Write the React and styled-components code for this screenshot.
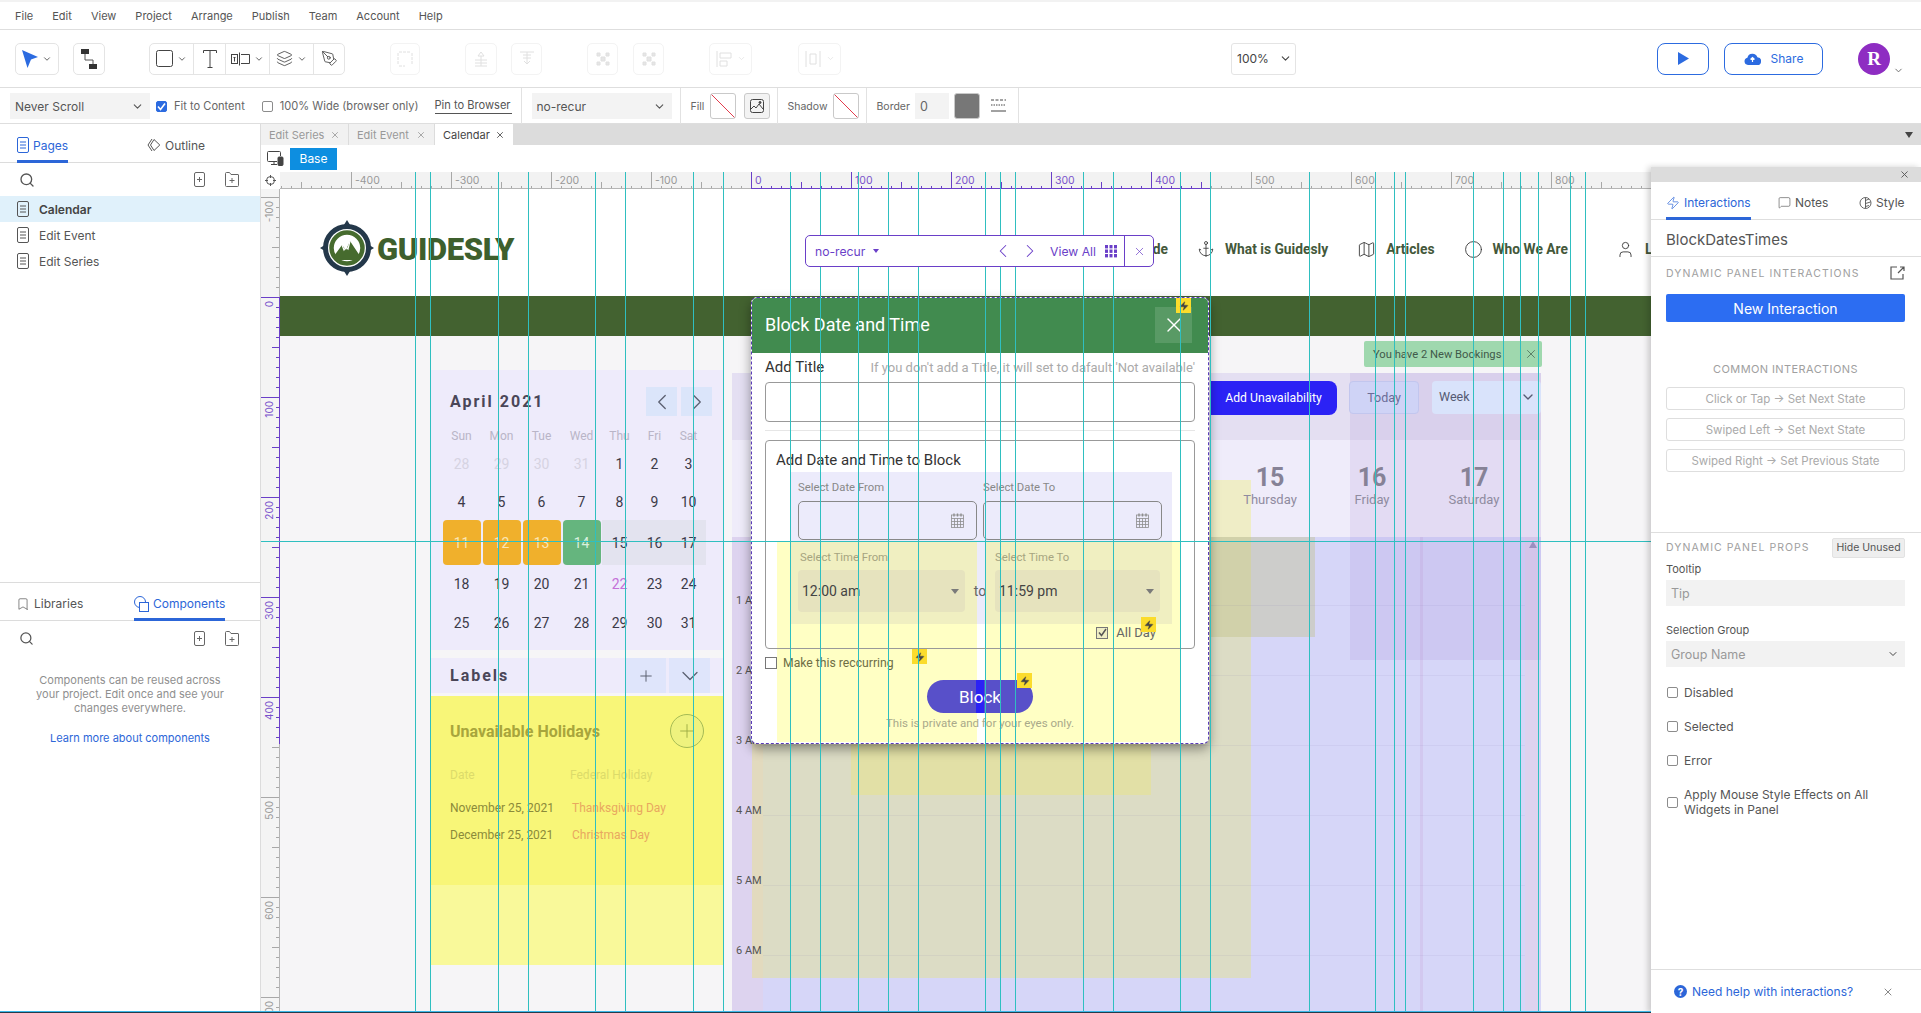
import React from 'react';
import styled, { createGlobalStyle } from 'styled-components';
import {
  Search, ChevronDown, X, ChevronLeft, ChevronRight, Plus, Anchor, Map as MapIcon, Info, User,
  Layers, PenTool, Bookmark, Zap, MessageSquare,
} from 'lucide-react';

const GlobalStyle = createGlobalStyle`
  html, body { margin: 0; padding: 0; height: 100%; overflow: hidden; background: #fff; }
  body { font-family: 'Inter', 'Liberation Sans', sans-serif; color: #444; }
  * { box-sizing: border-box; }
`;

/* ---------- app chrome ---------- */
const Shell = styled.div`
  width: 1921px;
  height: 1013px;
  display: flex;
  flex-direction: column;
  overflow: hidden;
  font-size: 11.1px;
`;

const MenuBar = styled.div`
  height: 30px;
  flex: none;
  display: flex;
  align-items: center;
  gap: 19px;
  padding: 0 0 0 15px;
  border-top: 2px solid #f2f2f2;
  border-bottom: 1px solid #dedede;
  color: #555;
  font-size: 11px;
`;

const Toolbar = styled.div`
  height: 58px;
  flex: none;
  display: flex;
  align-items: center;
  padding: 0 0 0 15px;
  border-bottom: 1px solid #dedede;
`;

const ToolGroup = styled.div`
  height: 32px;
  flex: none;
  display: flex;
  align-items: stretch;
  margin-left: ${p => p.$gap || 0}px;
  border: 1px solid ${p => (p.$off ? '#f3f3f3' : '#e4e4e4')};
  border-radius: 5px;
`;

const ToolCell = styled.div`
  width: ${p => p.$w}px;
  display: flex;
  align-items: center;
  justify-content: center;
  gap: 4px;
  color: ${p => (p.$off ? '#e2e2e2' : '#444')};
  & + & { border-left: 1px solid #e4e4e4; }
`;

const ZoomSelect = styled.div`
  width: 65px;
  height: 32px;
  margin-left: ${p => p.$gap}px;
  display: flex;
  align-items: center;
  justify-content: space-between;
  padding: 0 3px 0 5px;
  border: 1px solid #e4e4e4;
  border-radius: 3px;
  font-size: 12px;
`;

const PlayButton = styled.div`
  width: 52px;
  height: 32px;
  margin-left: 361px;
  display: flex;
  align-items: center;
  justify-content: center;
  border: 1px solid #2c6be0;
  border-radius: 8px;
`;

const ShareButton = styled.div`
  width: 99px;
  height: 32px;
  margin-left: 15px;
  display: flex;
  align-items: center;
  justify-content: center;
  gap: 10px;
  border: 1px solid #2c6be0;
  border-radius: 8px;
  color: #2c6be0;
  font-size: 12px;
`;

const Avatar = styled.div`
  width: 32px;
  height: 32px;
  margin-left: 35px;
  border-radius: 50%;
  background: #8e2dc2;
  color: #fff;
  display: flex;
  align-items: center;
  justify-content: center;
  font: 700 19px 'Liberation Serif', serif;
`;

const AvatarCaret = styled.div`
  margin: 24px 0 0 3px;
  color: #666;
  display: flex;
`;

const PropsBar = styled.div`
  height: 36px;
  flex: none;
  display: flex;
  align-items: center;
  padding: 1px 0 0 10px;
  border-bottom: 1px solid #dedede;
  color: #666;
  white-space: nowrap;
`;

const FieldSelect = styled.div`
  width: ${p => p.$w}px;
  height: 26px;
  flex: none;
  margin-left: ${p => p.$gap || 0}px;
  display: flex;
  align-items: center;
  justify-content: space-between;
  padding: 0 6px 0 5px;
  background: #f3f3f3;
  font-size: 12px;
  color: #555;
`;

const CheckLabel = styled.label`
  display: flex;
  align-items: center;
  gap: 7px;
  flex: none;
  margin-left: ${p => p.$gap}px;
`;

const CheckBox = styled.span`
  width: 11px;
  height: 11px;
  flex: none;
  border-radius: 2px;
  border: 1px solid ${p => (p.$on ? '#2c6be0' : '#8c8c8c')};
  background: ${p => (p.$on ? '#2c6be0' : '#fff')};
  color: #fff;
  display: flex;
  align-items: center;
  justify-content: center;
`;

const PinLink = styled.span`
  margin-left: 16px;
  padding-bottom: 1px;
  border-bottom: 1px solid #555;
  color: #555;
  flex: none;
  width: 77px;
`;

const PropGroup = styled.div`
  height: 36px;
  flex: none;
  width: ${p => p.$w}px;
  margin-left: ${p => p.$gap || 0}px;
  border-left: 1px solid #e2e2e2;
  display: flex;
  align-items: center;
  padding-left: ${p => p.$pad || 0}px;
  font-size: 10.5px;
`;

const Swatch = styled.div`
  width: 26px;
  height: 26px;
  flex: none;
  margin-left: ${p => p.$gap || 0}px;
  border: 1px solid #c9c9c9;
  border-radius: 3px;
  background: ${p => p.$bg || 'linear-gradient(to top right, #fff 48%, #e23b4c 48.5%, #e23b4c 51.5%, #fff 52%)'};
  display: flex;
  align-items: center;
  justify-content: center;
`;

const BorderLines = styled.div`
  margin-left: 11px;
  display: flex;
`;

const NumBox = styled.div`
  width: 34px;
  height: 26px;
  margin-left: 5px;
  padding-left: 5px;
  background: #f3f3f3;
  display: flex;
  align-items: center;
  font-size: 12.5px;
`;

const Workspace = styled.div`
  flex: 1;
  min-height: 0;
  display: flex;
`;

/* ---------- left sidebar ---------- */
const Sidebar = styled.aside`
  width: 261px;
  flex: none;
  display: flex;
  flex-direction: column;
  border-right: 1px solid #dcdcdc;
  background: #fff;
`;

const SideSection = styled.div`
  height: ${p => (p.$h ? `${p.$h}px` : 'auto')};
  flex: ${p => (p.$h ? 'none' : 1)};
  border-top: ${p => (p.$top ? '1px solid #dcdcdc' : 'none')};
`;

const SideTabs = styled.div`
  height: ${p => p.$h}px;
  display: flex;
  border-bottom: 1px solid #dcdcdc;
  position: relative;
`;

const SideTab = styled.div`
  position: absolute;
  left: ${p => p.$x}px;
  top: 0;
  height: calc(100% + 1px);
  padding-top: 6px;
  display: flex;
  align-items: center;
  gap: 4px;
  font-size: 12px;
  color: ${p => (p.$on ? '#2c66d8' : '#555')};
  border-bottom: 3px solid ${p => (p.$on ? '#2c66d8' : 'transparent')};
`;

const SearchRow = styled.div`
  height: ${p => p.$h}px;
  display: flex;
  align-items: center;
  padding: 0 21px 0 19px;
  gap: 20px;
  color: #555;
  & > svg:first-child { margin-right: auto; }
`;

const PageRow = styled.div`
  height: 26px;
  display: flex;
  align-items: center;
  gap: 10px;
  padding-left: 17px;
  font-size: 12px;
  font-weight: ${p => (p.$on ? 600 : 400)};
  color: ${p => (p.$on ? '#444' : '#555')};
  background: ${p => (p.$on ? '#e0f1fb' : 'transparent')};
`;

const EmptyNote = styled.p`
  margin: 17px 0 0;
  text-align: center;
  font-size: 11px;
  line-height: 14px;
  color: #8f8f8f;
`;

const LearnLink = styled.div`
  margin-top: 16px;
  text-align: center;
  font-size: 11px;
  color: #2c66d8;
`;

/* ---------- main area ---------- */
const Main = styled.main`
  flex: 1;
  min-width: 0;
  position: relative;
  display: flex;
  flex-direction: column;
  background: #fff;
`;

const TabBar = styled.div`
  height: 21px;
  flex: none;
  display: flex;
  background: #dcdcdc;
  position: relative;
`;

const DocTab = styled.div`
  width: ${p => p.$w}px;
  display: flex;
  align-items: center;
  justify-content: space-between;
  padding: 0 8px;
  margin-right: 1px;
  font-size: 11px;
  background: ${p => (p.$on ? '#fff' : '#f1f1f1')};
  color: ${p => (p.$on ? '#444' : '#999')};
`;

const TabMenuCaret = styled.span`
  position: absolute;
  right: 8px;
  top: 8px;
  border: 4.5px solid transparent;
  border-top: 6px solid #444;
  border-bottom: 0;
`;

const DeviceRow = styled.div`
  height: 27px;
  flex: none;
  display: flex;
  align-items: center;
  gap: 6px;
  padding-left: 6px;
  color: #444;
`;

const BaseButton = styled.div`
  width: 47px;
  height: 22px;
  display: flex;
  align-items: center;
  justify-content: center;
  background: #0d8ee0;
  color: #fff;
  font-size: 12px;
`;

const RulerRow = styled.div`
  height: 17px;
  flex: none;
  display: flex;
  background: #f2f2f2;
`;

const RulerCorner = styled.div`
  width: 19px;
  flex: none;
  background: #fff;
  display: flex;
  align-items: center;
  justify-content: center;
  color: #555;
`;

const CanvasRow = styled.div`
  flex: 1;
  min-height: 0;
  display: flex;
  overflow: hidden;
`;

const SideRuler = styled.div`
  width: 19px;
  flex: none;
  background: #f4f4f4;
  display: flex;
`;

/* free canvas: what sits on it is placed by the design's own coordinates */
const Canvas = styled.div`
  flex: 1;
  min-width: 0;
  position: relative;
  overflow: hidden;
  background: #f6f5f7;
  font-family: 'Roboto', 'Liberation Sans', sans-serif;
`;

const SiteHeader = styled.div`
  height: 107px;
  background: #fff;
`;

const SiteBand = styled.div`
  height: 40px;
  background: #436230;
`;

const LogoWrap = styled.div`
  position: absolute;
  left: 40px;
  top: 31px;
  display: flex;
  align-items: center;
  gap: 3px;
`;

const LogoText = styled.span`
  margin-top: 2px;
  font: 900 31px 'Roboto', sans-serif;
  color: #3e5f2d;
  letter-spacing: -0.35px;
`;

const SiteNav = styled.nav`
  position: absolute;
  left: 852px;
  top: 49px;
  height: 22px;
  display: flex;
  align-items: center;
  gap: 29px;
  white-space: nowrap;
`;

const SiteNavItem = styled.span`
  display: flex;
  align-items: center;
  gap: 10px;
  margin-left: ${p => p.$gap || 0}px;
  font-size: 13.8px;
  font-weight: 700;
  color: #44583a;
  svg { color: #333; }
`;

const SelectionDots = styled.span`
  position: absolute;
  left: 670px;
  top: 106px;
  width: 100px;
  border-top: 1px dashed #fff;
`;

/* calendar sidebar on the canvas */
const CalPanel = styled.section`
  position: absolute;
  left: 150px;
  top: 181px;
  width: 293px;
  height: 280px;
  padding: 17px 11px 0 0;
  background: #eeebfb;
`;

const CalHead = styled.div`
  display: flex;
  align-items: center;
  gap: 4px;
  padding-left: 20px;
`;

const CalTitle = styled.h3`
  margin: 0 auto 0 0;
  font-size: 16px;
  font-weight: 700;
  letter-spacing: 2px;
  color: #4a4658;
`;

const CalNav = styled.div`
  width: 31px;
  height: 29px;
  background: #dbe5fa;
  color: #5b6070;
  display: flex;
  align-items: center;
  justify-content: center;
`;

const CalGrid = styled.div`
  display: grid;
  grid-template-columns: 40px 40px 40px 40px 36px 34px 34px;
  grid-template-rows: ${p => p.$rows};
  margin: ${p => p.$top}px 0 0 11.5px;
`;

const WeekName = styled.span`
  display: flex;
  align-items: center;
  justify-content: center;
  font-size: 12px;
  color: #b9b5c7;
`;

const tones = {
  muted: { color: '#d6d3e2' },
  plain: { color: '#3c3a48' },
  held: { color: '#fbe6b4', background: '#f0b02c', margin: '0 1px', borderRadius: '4px' },
  today: { color: '#d8f0df', background: '#65b57e', margin: '0 1px', borderRadius: '4px' },
  band: { color: '#3c3a48', background: '#e3e3ef' },
  pink: { color: '#c470d8' },
};

const DayCell = styled.span`
  display: flex;
  align-items: center;
  justify-content: center;
  font-size: 14px;
  ${p => tones[p.$tone]}
`;

const LabelsBar = styled.section`
  position: absolute;
  left: 150px;
  top: 469px;
  width: 293px;
  height: 35px;
  display: flex;
  align-items: center;
  gap: 3px;
  padding: 0 13px 0 20px;
  background: #eeebfb;
`;

const LabelsTitle = styled.h3`
  margin: 0 auto 0 0;
  font-size: 16px;
  font-weight: 700;
  letter-spacing: 2px;
  color: #4a4658;
`;

const LabelsBtn = styled.div`
  width: 41px;
  height: 35px;
  background: #dfe5fb;
  color: #5b6070;
  display: flex;
  align-items: center;
  justify-content: center;
`;

const HolidayPanel = styled.section`
  position: absolute;
  left: 150px;
  top: 507px;
  width: 293px;
  height: 269px;
  background: linear-gradient(#f8f678 189px, #f9f99a 189px);
`;

const HolidayHead = styled.div`
  height: 34px;
  margin: 18px 19px 0 20px;
  display: flex;
  align-items: center;
  justify-content: space-between;
`;

const HolidayTitle = styled.h4`
  margin: 0;
  font-size: 16px;
  font-weight: 700;
  color: #a8a53c;
`;

const RoundAdd = styled.div`
  width: 34px;
  height: 34px;
  border-radius: 50%;
  border: 1px solid #a5bb55;
  background: #eef27e;
  color: #9bab45;
  display: flex;
  align-items: center;
  justify-content: center;
`;

const HolidayRow = styled.div`
  display: grid;
  grid-template-columns: 120px 1fr;
  margin: ${p => p.$top}px 0 0 20px;
  font-size: 12px;
  line-height: 14px;
  color: ${p => (p.$head ? '#dcdb6a' : '#8b8a3a')};
`;

const HolidayName = styled.span`
  color: ${p => (p.$head ? '#dcdb6a' : '#e8a860')};
  margin-left: ${p => (p.$head ? 0 : 2)}px;
`;

/* big week calendar on the canvas */
const Tint = styled.div`
  position: absolute;
  left: ${p => p.$x - 280}px;
  top: ${p => p.$y - 189}px;
  width: ${p => p.$w}px;
  height: ${p => p.$h}px;
  background: ${p => p.$bg};
`;

const TimeGrid = styled.div`
  position: absolute;
  left: 456px;
  top: 347px;
  width: 789px;
`;

const TimeRow = styled.div`
  height: 70px;
  position: relative;
  display: flex;
  align-items: flex-end;
  font-size: 11px;
  line-height: 11px;
  color: #555;
  &::after {
    content: '';
    position: absolute;
    left: 27px;
    right: 0;
    bottom: 0;
    height: 1px;
    background: rgba(120, 100, 170, 0.08);
  }
`;

const BookingNote = styled.div`
  position: absolute;
  left: 1084px;
  top: 152px;
  width: 178px;
  height: 26px;
  display: flex;
  align-items: center;
  justify-content: space-between;
  padding: 0 4px 0 9px;
  background: #9fd8ae;
  font-size: 11.2px;
  color: #3f5a4a;
  border-radius: 2px;
`;

const CalTools = styled.div`
  position: absolute;
  left: 930px;
  top: 192px;
  display: flex;
  align-items: flex-start;
`;

const AddButton = styled.div`
  width: 127px;
  height: 34px;
  display: flex;
  align-items: center;
  justify-content: center;
  border-radius: 0 8px 8px 0;
  background: #2b22f5;
  color: #fff;
  font-size: 12.2px;
`;

const TodayButton = styled.div`
  width: 70px;
  height: 33px;
  margin-left: 12px;
  display: flex;
  align-items: center;
  justify-content: center;
  border: 1px solid #c2c6ee;
  border-radius: 4px;
  background: #cfd3f6;
  color: #6b6c96;
  font-size: 12.5px;
`;

const WeekSelect = styled.div`
  width: 109px;
  height: 33px;
  margin-left: 13px;
  display: flex;
  align-items: center;
  justify-content: space-between;
  padding: 0 5px 2px 7px;
  border-radius: 4px;
  background: #d9e3fb;
  color: #555a72;
  font-size: 12.5px;
`;

const DayHeads = styled.div`
  position: absolute;
  left: 939px;
  top: 275px;
  display: flex;
`;

const DayHead = styled.div`
  width: 102px;
  display: flex;
  flex-direction: column;
  align-items: center;
  color: #8f8ba0;
  font-size: 13px;
  line-height: 16px;
`;

const DayNumber = styled.strong`
  font-size: 25px;
  line-height: 28px;
  font-weight: 700;
  color: #868296;
`;

const ScrollUp = styled.span`
  position: absolute;
  left: 1249px;
  top: 352px;
  border: 4.5px solid transparent;
  border-top: 0;
  border-bottom: 7px solid #9b8fc0;
`;

/* the dialog */
const Modal = styled.div`
  position: absolute;
  left: 471px;
  top: 108px;
  width: 458px;
  height: 447px;
  background: #fff;
  border: 1px dashed #5a3cb8;
  border-radius: 6px;
  box-shadow: 0 5px 12px rgba(0, 0, 0, 0.4);
`;

const ModalHead = styled.header`
  position: relative;
  height: 55px;
  display: flex;
  align-items: center;
  justify-content: space-between;
  padding: 0 16px 2px 13px;
  background: #418b4f;
  border-radius: 5px 5px 0 0;
  color: #fff;
`;

const ModalTitle = styled.h2`
  margin: 0;
  font-size: 18px;
  font-weight: 400;
`;

const CloseSquare = styled.div`
  width: 37px;
  height: 36px;
  display: flex;
  align-items: center;
  justify-content: center;
  background: rgba(255, 255, 255, 0.13);
`;

const ModalTint = styled.div`
  position: absolute;
  left: ${p => p.$x}px;
  top: ${p => p.$y}px;
  width: ${p => p.$w}px;
  height: ${p => p.$h}px;
  background: ${p => p.$bg};
`;

const ModalBody = styled.div`
  position: relative;
  padding: 3px 13px 0;
`;

const TitleRow = styled.div`
  height: 22px;
  display: flex;
  align-items: center;
  justify-content: space-between;
  font-size: 15px;
  color: #333;
`;

const Hint = styled.span`
  font-size: 13px;
  color: #aaa;
`;

const TextBox = styled.div`
  height: 40px;
  margin-top: 4px;
  border: 1px solid #999;
  border-radius: 4px;
`;

const Rule = styled.div`
  height: 1px;
  margin-top: 8px;
  background: #e6e6e6;
`;

const BlockBox = styled.fieldset`
  height: 209px;
  margin: 9px 0 0;
  padding: 9px 32px 0 32px;
  border: 1px solid #999;
  border-radius: 4px;
  display: block;
`;

const BoxTitle = styled.div`
  margin-left: -22px;
  font-size: 15px;
  line-height: 20px;
  color: #333;
`;

const FieldRow = styled.div`
  display: flex;
  margin-top: ${p => p.$top}px;
`;

const FieldCol = styled.div`
  width: ${p => p.$w}px;
  flex: none;
  margin-left: ${p => p.$gap || 0}px;
`;

const FieldLabel = styled.div`
  height: 14px;
  margin-left: ${p => p.$ml || 0}px;
  font-size: 11.3px;
  line-height: 14px;
  color: ${p => p.$color || '#888'};
`;

const DateInput = styled.div`
  height: 39px;
  margin-top: 6px;
  display: flex;
  align-items: center;
  justify-content: flex-end;
  padding-right: 12px;
  border: 1px solid #888;
  border-radius: 5px;
`;

const TimeSelect = styled.div`
  height: 42px;
  margin-top: 5px;
  display: flex;
  align-items: center;
  justify-content: space-between;
  padding: 0 6px 0 4px;
  border-radius: 4px;
  background: #e6e3be;
  font-size: 14px;
  color: #444;
`;

const Caret = styled.span`
  border: 4px solid transparent;
  border-top: 5px solid #7a7a7a;
  border-bottom: 0;
`;

const ToWord = styled.span`
  width: 30px;
  flex: none;
  margin-top: 19px;
  align-self: center;
  text-align: center;
  font-size: 14px;
  color: #666;
`;

const AllDayRow = styled.div`
  display: flex;
  justify-content: flex-end;
  align-items: center;
  gap: 8px;
  margin-top: 13px;
  padding-right: 6px;
  font-size: 13px;
  color: #666;
`;

const MiniCheck = styled.span`
  width: 12px;
  height: 12px;
  border: 1px solid #777;
  display: flex;
  align-items: center;
  justify-content: center;
  color: #555;
  background: ${p => (p.$fill ? '#efeec4' : 'transparent')};
`;

const RecurRow = styled.div`
  height: 14px;
  margin-top: 7px;
  display: flex;
  align-items: center;
  gap: 6px;
  font-size: 12.2px;
  color: #6e6e45;
`;

const BlockButton = styled.div`
  width: 106px;
  height: 33px;
  margin: 10px auto 0;
  display: flex;
  align-items: center;
  justify-content: center;
  border-radius: 17px;
  background: linear-gradient(90deg, #5850c9 49px, #2b22f5 49px, #2b22f5 57px, #5850c9 57px);
  color: #fff;
  font-size: 17px;
`;

const PrivateNote = styled.div`
  margin-top: 3px;
  text-align: center;
  font-size: 11.5px;
  line-height: 14px;
  color: #a9a98a;
`;

const BoltBadge = styled.span`
  position: absolute;
  z-index: 2;
  left: ${p => p.$x - 751}px;
  top: ${p => p.$y - 297}px;
  width: 15px;
  height: 15px;
  display: flex;
  align-items: center;
  justify-content: center;
  background: #fbdc2c;
  color: #444;
`;

/* overlays in the main area */
const GuideV = styled.span`
  position: absolute;
  top: 48px;
  bottom: 2px;
  width: 1px;
  z-index: 3;
  background: #2fbfc0;
`;

const GuideH = styled.span`
  position: absolute;
  left: 0;
  right: 0;
  top: 417px;
  height: 1px;
  z-index: 3;
  background: #2fbfc0;
`;

const RecurPopover = styled.div`
  position: absolute;
  z-index: 4;
  left: 544px;
  top: 111px;
  width: 349px;
  height: 32px;
  display: flex;
  align-items: center;
  background: #fff;
  border: 1px solid #6a3fc8;
  border-radius: 5px;
  color: #6a3fc8;
  font-size: 12.2px;
`;

const RecurName = styled.span`
  display: flex;
  align-items: center;
  gap: 8px;
  margin: 0 auto 0 9px;
`;

const RecurCaret = styled.span`
  border: 3.5px solid transparent;
  border-top: 4.5px solid #6a3fc8;
  border-bottom: 0;
`;

const RecurNav = styled.span`
  display: flex;
  gap: 5px;
  margin-right: 9px;
`;

const ViewAll = styled.span`
  display: flex;
  align-items: center;
  gap: 9px;
  padding-right: 7px;
`;

const RecurClose = styled.span`
  width: 29px;
  align-self: stretch;
  border-left: 1px solid #6a3fc8;
  display: flex;
  align-items: center;
  justify-content: center;
`;

/* right panel */
const RightPanel = styled.aside`
  position: absolute;
  z-index: 5;
  top: 43px;
  right: 0;
  bottom: 0;
  width: 270px;
  display: flex;
  flex-direction: column;
  background: #fff;
  box-shadow: -3px 0 6px rgba(0, 0, 0, 0.18);
`;

const PanelGrip = styled.div`
  height: 15px;
  flex: none;
  display: flex;
  align-items: center;
  justify-content: flex-end;
  padding-right: 11px;
  background: #dcdcdc;
  color: #555;
`;

const PanelTabs = styled.div`
  height: 38px;
  flex: none;
  position: relative;
  border-bottom: 1px solid #dedede;
`;

const PanelTitle = styled.div`
  height: 37px;
  flex: none;
  display: flex;
  align-items: center;
  padding: 3px 0 0 15px;
  font-size: 15px;
  color: #555;
  border-bottom: 1px solid #dedede;
`;

const PanelBody = styled.div`
  flex: 1;
  padding: 0 16px 0 15px;
  display: flex;
  flex-direction: column;
`;

const SectionHead = styled.div`
  display: flex;
  align-items: center;
  justify-content: space-between;
  height: ${p => p.$h}px;
  padding-top: 1px;
  font-size: 10.5px;
  letter-spacing: 1.05px;
  color: #a0a0a0;
  white-space: nowrap;
`;

const NewInteraction = styled.div`
  height: 28px;
  flex: none;
  margin: 6px 0 0;
  display: flex;
  align-items: center;
  justify-content: center;
  border-radius: 2px;
  background: #2c6df2;
  color: #fff;
  font-size: 14px;
`;

const CommonTitle = styled.div`
  margin: 40px 0 11px;
  text-align: center;
  font-size: 11px;
  line-height: 14px;
  letter-spacing: 0.4px;
  color: #a0a0a0;
`;

const CommonButton = styled.div`
  height: 23px;
  margin-bottom: 8px;
  display: flex;
  align-items: center;
  justify-content: center;
  border: 1px solid #dedede;
  border-radius: 3px;
  font-size: 11.5px;
  color: #aaa;
`;

const PropsDivider = styled.div`
  height: 1px;
  flex: none;
  margin: 52px -16px 0 -15px;
  background: #dedede;
`;

const HideUnused = styled.div`
  width: 73px;
  height: 20px;
  display: flex;
  align-items: center;
  justify-content: center;
  border-radius: 2px;
  background: #eee;
  border: 1px solid #e2e2e2;
  font-size: 10.5px;
  letter-spacing: 0;
  color: #555;
`;

const PropLabel = styled.div`
  margin-top: ${p => p.$top}px;
  font-size: 11px;
  line-height: 14px;
  color: #555;
`;

const PropField = styled.div`
  height: 26px;
  flex: none;
  margin-top: 4px;
  display: flex;
  align-items: center;
  justify-content: space-between;
  padding: 0 6px 0 5px;
  background: #f2f2f2;
  font-size: 12.5px;
  color: #999;
`;

const PropCheck = styled.label`
  display: flex;
  align-items: center;
  gap: 6px;
  margin: ${p => p.$top}px 0 0 1px;
  font-size: 12px;
  line-height: 15px;
  color: #555;
`;

const PanelFoot = styled.div`
  height: 44px;
  flex: none;
  display: flex;
  align-items: center;
  justify-content: space-between;
  padding: 0 27px 0 23px;
  border-top: 1px solid #dedede;
`;

const HelpLink = styled.span`
  display: flex;
  align-items: center;
  gap: 5px;
  font-size: 12px;
  color: #2c66d8;
`;

const HelpDot = styled.span`
  width: 13px;
  height: 13px;
  border-radius: 50%;
  background: #2c66d8;
  color: #fff;
  display: flex;
  align-items: center;
  justify-content: center;
  font-size: 10px;
  font-weight: 700;
`;

const BottomEdge = styled.div`
  position: absolute;
  left: -261px;
  right: 270px;
  bottom: 0;
  height: 2px;
  z-index: 6;
  background: linear-gradient(#3bb8e8 50%, #243b4a 50%);
`;

/* ---------- drawings ---------- */
const PageIcon = ({ color = '#555' }) => (
  <svg width="12" height="16" viewBox="0 0 12 16" fill="none" stroke={color} strokeWidth="1">
    <rect x="0.5" y="0.5" width="11" height="15" rx="1.5" />
    <path d="M3 5h6M3 8h6M3 11h6" />
  </svg>
);

const AddPage = () => (
  <svg width="11" height="15" viewBox="0 0 11 15" fill="none" stroke="#666">
    <rect x="0.5" y="0.5" width="10" height="14" rx="1.5" />
    <path d="M5.5 5v5M3 7.5h5" />
  </svg>
);

const AddFolder = () => (
  <svg width="14" height="15" viewBox="0 0 14 15" fill="none" stroke="#666">
    <path d="M.5 1.5a1 1 0 0 1 1-1h3l1.5 2H13a.5.5 0 0 1 .5.5v10.5a1 1 0 0 1-1 1h-11a1 1 0 0 1-1-1z" />
    <path d="M7 6v5M4.5 8.5h5" />
  </svg>
);

const ArrowTool = () => (
  <svg width="16" height="18" viewBox="0 0 16 18">
    <path d="M0 0l16 7-7 2.5L5.5 18z" fill="#2c6be0" />
  </svg>
);

const ConnectorTool = () => (
  <svg width="16" height="20" viewBox="0 0 16 20" fill="none">
    <rect x="0" y="0" width="8" height="5" fill="#333" />
    <rect x="8" y="15" width="8" height="5" fill="#333" />
    <path d="M4 5v6h8v4" stroke="#555" />
  </svg>
);

const TextTool = () => (
  <svg width="14" height="18" viewBox="0 0 14 18" fill="none" stroke="#444">
    <path d="M0.5 3V0.5h13V3M7 0.5v17M4.5 17.5h5" />
  </svg>
);

const FieldTool = () => (
  <svg width="19" height="14" viewBox="0 0 19 14" fill="none" stroke="#444">
    <rect x="0.5" y="2.5" width="6" height="9" />
    <path d="M8.5 0.5v13M10 2.5h8.5v9H10" />
    <path d="M2.5 5.5h2M3.5 5.5v4" />
  </svg>
);

const FadedShape = ({ kind }) => (
  <svg width="18" height="18" viewBox="0 0 18 18" fill="none" stroke="#e0e0e0">
    {kind === 'frame' && <path d="M3 2h12M16 3v12M3 16h6M2 3v12" strokeDasharray="3 1" />}
    {kind === 'up' && <path d="M9 2l-3 4h6zM9 6v10M3 10h12M3 13h12M3 16h12" />}
    {kind === 'down' && <path d="M2 2h14M9 2v12l-3-3M9 14l3-3M5 5h8M5 8h8" />}
    {kind === 'group' && <path d="M3 3h3v3H3zM12 3h3v3h-3zM3 12h3v3H3zM12 12h3v3h-3zM7 7h4v4H7z" fill="#e6e6e6" />}
    {kind === 'align' && <path d="M2 1v16M5 3h11v5H5zM5 11h7v5H5z" />}
    {kind === 'space' && <path d="M2 1v16M16 1v16M6 4h6v10H6z" />}
  </svg>
);

const CloudShare = () => (
  <svg width="17" height="15" viewBox="0 0 17 15">
    <path d="M4 14a3.7 3.7 0 0 1-.6-7.3 5.2 5.2 0 0 1 10-.5A3.9 3.9 0 0 1 13 14z" fill="#2c6be0" />
    <path d="M8.5 11V6.5M6.5 8.5l2-2 2 2" stroke="#fff" strokeWidth="1.2" fill="none" />
  </svg>
);

const OutlineIcon = () => (
  <svg width="14" height="14" viewBox="0 0 14 14" fill="none" stroke="#555">
    <path d="M5 1L1 7l4 6M7 1.5L3.5 7 7 12.5 12.8 7z" />
  </svg>
);

const ComponentsIcon = () => (
  <svg width="15" height="16" viewBox="0 0 15 16" fill="none" stroke="#2c66d8">
    <circle cx="6" cy="6" r="5.5" />
    <rect x="5.5" y="6.5" width="9" height="9" fill="#fff" />
  </svg>
);

const StyleIcon = () => (
  <svg width="13" height="14" viewBox="0 0 13 14" fill="none" stroke="#555" strokeWidth="0.9">
    <circle cx="6.5" cy="7" r="5.5" />
    <path d="M6.5 1.5v11M6.5 4.5l3.5-1.5M6.5 7.5l5-1.5M6.5 10.5l3.5-1" />
  </svg>
);

const ImageFill = () => (
  <svg width="14" height="14" viewBox="0 0 14 14" fill="none" stroke="#444">
    <rect x="0.5" y="0.5" width="13" height="13" rx="2" />
    <path d="M1 10l3-3 2 2 3-4 4 5" />
    <circle cx="10" cy="3.5" r="1" fill="#444" />
  </svg>
);

const BorderStyle = () => (
  <svg width="15" height="14" viewBox="0 0 15 14" fill="none" stroke="#444">
    <path d="M0 1h15" strokeDasharray="3 1.5" />
    <path d="M0 6h15" strokeDasharray="1.5 1" />
    <path d="M0 12h15" />
  </svg>
);

const Target = () => (
  <svg width="11" height="11" viewBox="0 0 11 11" fill="none" stroke="#555">
    <circle cx="5.5" cy="5.5" r="4" />
    <path d="M5.5 0v3M5.5 8v3M0 5.5h3M8 5.5h3" />
  </svg>
);

const DeviceIcon = () => (
  <svg width="17" height="15" viewBox="0 0 17 15" fill="none" stroke="#444">
    <path d="M10 10.5H1.5a1 1 0 0 1-1-1v-8a1 1 0 0 1 1-1h11a1 1 0 0 1 1 1V5M4 13.5h6M7 10.5v3" />
    <rect x="11" y="6" width="5" height="8.5" rx="1" fill="#444" />
  </svg>
);

const DateGlyph = () => (
  <svg width="13" height="15" viewBox="0 0 13 15" fill="none" stroke="#8d8d8d" strokeWidth="0.8">
    <rect x="0.5" y="2" width="12" height="12.5" />
    <path d="M0.5 5.5h12M0.5 8.5h12M0.5 11.5h12M3.5 5.5v9M6.5 5.5v9M9.5 5.5v9" />
    <path d="M3 0.5v3M6.5 0.5v3M10 0.5v3" strokeWidth="1.4" />
  </svg>
);

const DotGrid = () => (
  <svg width="12" height="13" viewBox="0 0 12 13" fill="#6a3fc8">
    {[0, 4.5, 9].map(x => [0, 4.5, 9].map(y => <rect key={`${x}-${y}`} x={x} y={y} width="3" height="3.4" />))}
  </svg>
);

const ExportIcon = () => (
  <svg width="15" height="14" viewBox="0 0 15 14" fill="none" stroke="#555" strokeWidth="1.2">
    <path d="M7 1H1v12h12V8M8 7l6-6M10 1h4v4" />
  </svg>
);

const Logo = () => (
  <svg width="54" height="56" viewBox="0 0 54 56">
    <circle cx="27" cy="28" r="21.5" fill="none" stroke="#24384a" strokeWidth="5" />
    <path d="M27 0l5 8H22zM27 56l-5-8h10zM0 28l8-5v10zM54 28l-8 5V23z" fill="#24384a" />
    <circle cx="27" cy="28" r="15.5" fill="none" stroke="#466b2e" strokeWidth="4.5" />
    <path d="M14 36l8-11 4 5 4-9 10 15-6 4H20z" fill="#466b2e" />
    <path d="M22 25l2 5 2-3 2 2 2-8" stroke="#fff" strokeWidth="1.2" fill="none" />
  </svg>
);

const rulerColor = (inRange) => (inRange ? '#6a3fc8' : '#a8a8a8');

const TopRuler = () => {
  const ticks = [];
  for (let v = -470; v <= 1170; v += 10) {
    const x = v + 471;
    const on = v >= 0 && v <= 459;
    const major = v % 100 === 0;
    const mid = v % 50 === 0;
    ticks.push(
      <line key={v} x1={x + 0.5} x2={x + 0.5} y1={major ? 0 : mid ? 10 : 14} y2="17" stroke={rulerColor(on)} />,
    );
    if (major) {
      ticks.push(
        <text key={`t${v}`} x={x + 4} y="12" fontSize="10.5" fontFamily="Inter" fill={on ? '#7a52cc' : '#999'}>{v}</text>,
      );
    }
  }
  return (
    <svg width="1641" height="17">
      {ticks}
      <line x1="0" x2="1641" y1="16.5" y2="16.5" stroke="#b5b5b5" />
      <line x1="471" x2="931" y1="16.5" y2="16.5" stroke="#6a3fc8" />
    </svg>
  );
};

const LeftRuler = () => {
  const ticks = [];
  for (let v = -100; v <= 720; v += 10) {
    const y = v + 108;
    const on = v >= 0 && v <= 447;
    const major = v % 100 === 0;
    const mid = v % 50 === 0;
    ticks.push(
      <line key={v} y1={y + 0.5} y2={y + 0.5} x1={major ? 0 : mid ? 11 : 15} x2="19" stroke={rulerColor(on)} />,
    );
    if (major) {
      ticks.push(
        <text
          key={`t${v}`}
          transform={`translate(12 ${y + 4}) rotate(-90)`}
          textAnchor="end"
          fontSize="10"
          fontFamily="Inter"
          fill={on ? '#7a52cc' : '#999'}
        >
          {v}
        </text>,
      );
    }
  }
  return (
    <svg width="19" height="830">
      {ticks}
      <line x1="18.5" x2="18.5" y1="0" y2="830" stroke="#b5b5b5" />
      <line x1="18.5" x2="18.5" y1="108" y2="555" stroke="#6a3fc8" />
    </svg>
  );
};

/* ---------- data ---------- */
const GUIDES = [
  415, 430, 498, 528, 595, 625, 693, 723, 790, 820, 858, 888, 918, 985, 1000, 1015, 1083, 1113, 1180, 1210,
  1309, 1375, 1394, 1405, 1473, 1503, 1520, 1538, 1570, 1585,
];

const MENU = ['File', 'Edit', 'View', 'Project', 'Arrange', 'Publish', 'Team', 'Account', 'Help'];
const WEEK = ['Sun', 'Mon', 'Tue', 'Wed', 'Thu', 'Fri', 'Sat'];
const DAYS = [
  ['28', 'muted'], ['29', 'muted'], ['30', 'muted'], ['31', 'muted'], ['1', 'plain'], ['2', 'plain'], ['3', 'plain'],
  ['4', 'plain'], ['5', 'plain'], ['6', 'plain'], ['7', 'plain'], ['8', 'plain'], ['9', 'plain'], ['10', 'plain'],
  ['11', 'held'], ['12', 'held'], ['13', 'held'], ['14', 'today'], ['15', 'band'], ['16', 'band'], ['17', 'band'],
  ['18', 'plain'], ['19', 'plain'], ['20', 'plain'], ['21', 'plain'], ['22', 'pink'], ['23', 'plain'], ['24', 'plain'],
  ['25', 'plain'], ['26', 'plain'], ['27', 'plain'], ['28', 'plain'], ['29', 'plain'], ['30', 'plain'], ['31', 'plain'],
];

const Bolt = () => <Zap size={10} fill="currentColor" strokeWidth={1} />;

const App = () => (
  <>
    <GlobalStyle />
    <Shell>
      <MenuBar>
        {MENU.map(m => <span key={m}>{m}</span>)}
      </MenuBar>

      <Toolbar>
        <ToolGroup>
          <ToolCell $w={42}><ArrowTool /><ChevronDown size={10} /></ToolCell>
        </ToolGroup>
        <ToolGroup $gap={14}>
          <ToolCell $w={30}><ConnectorTool /></ToolCell>
        </ToolGroup>
        <ToolGroup $gap={44}>
          <ToolCell $w={43}>
            <svg width="17" height="17" fill="none" stroke="#444"><rect x="0.5" y="0.5" width="16" height="16" rx="2" /></svg>
            <ChevronDown size={10} />
          </ToolCell>
          <ToolCell $w={32}><TextTool /></ToolCell>
          <ToolCell $w={44}><FieldTool /><ChevronDown size={10} /></ToolCell>
          <ToolCell $w={44}><Layers size={17} strokeWidth={1.2} /><ChevronDown size={10} /></ToolCell>
          <ToolCell $w={31}><PenTool size={17} strokeWidth={1.2} /></ToolCell>
        </ToolGroup>
        <ToolGroup $off $gap={45}><ToolCell $off $w={28}><FadedShape kind="frame" /></ToolCell></ToolGroup>
        <ToolGroup $off $gap={45}><ToolCell $off $w={30}><FadedShape kind="up" /></ToolCell></ToolGroup>
        <ToolGroup $off $gap={14}><ToolCell $off $w={29}><FadedShape kind="down" /></ToolCell></ToolGroup>
        <ToolGroup $off $gap={45}><ToolCell $off $w={29}><FadedShape kind="group" /></ToolCell></ToolGroup>
        <ToolGroup $off $gap={15}><ToolCell $off $w={29}><FadedShape kind="group" /></ToolCell></ToolGroup>
        <ToolGroup $off $gap={45}><ToolCell $off $w={41}><FadedShape kind="align" /><ChevronDown size={9} /></ToolCell></ToolGroup>
        <ToolGroup $off $gap={46}><ToolCell $off $w={41}><FadedShape kind="space" /><ChevronDown size={9} /></ToolCell></ToolGroup>
        <ZoomSelect $gap={390}>100%<ChevronDown size={13} /></ZoomSelect>
        <PlayButton>
          <svg width="11" height="13"><path d="M0 0l11 6.5L0 13z" fill="#2c6be0" /></svg>
        </PlayButton>
        <ShareButton><CloudShare />Share</ShareButton>
        <Avatar>R</Avatar>
        <AvatarCaret><ChevronDown size={11} /></AvatarCaret>
      </Toolbar>

      <PropsBar>
        <FieldSelect $w={140}>Never Scroll<ChevronDown size={13} /></FieldSelect>
        <CheckLabel $gap={6}>
          <CheckBox $on>
            <svg width="9" height="9" fill="none" stroke="#fff" strokeWidth="1.6"><path d="M1 4.5l2.5 3L8 1.5" /></svg>
          </CheckBox>
          Fit to Content
        </CheckLabel>
        <CheckLabel $gap={17}><CheckBox />100% Wide (browser only)</CheckLabel>
        <PinLink>Pin to Browser</PinLink>
        <PropGroup $w={159} $gap={9} $pad={10}>
          <FieldSelect $w={140}>no-recur<ChevronDown size={13} /></FieldSelect>
        </PropGroup>
        <PropGroup $w={97} $pad={10}>
          Fill<Swatch $gap={6} /><Swatch $gap={8} $bg="#f3f3f3"><ImageFill /></Swatch>
        </PropGroup>
        <PropGroup $w={89} $pad={10}>
          Shadow<Swatch $gap={6} />
        </PropGroup>
        <PropGroup $w={152} $pad={10}>
          Border<NumBox>0</NumBox><Swatch $gap={5} $bg="#777" /><BorderLines><BorderStyle /></BorderLines>
        </PropGroup>
        <PropGroup $w={1} />
      </PropsBar>

      <Workspace>
        <Sidebar>
          <SideSection $h={458}>
            <SideTabs $h={39}>
              <SideTab $on $x={17}><PageIcon color="#2c66d8" />Pages</SideTab>
              <SideTab $x={147}><OutlineIcon />Outline</SideTab>
            </SideTabs>
            <SearchRow $h={33}>
              <Search size={16} />
              <AddPage />
              <AddFolder />
            </SearchRow>
            <PageRow $on><PageIcon />Calendar</PageRow>
            <PageRow><PageIcon />Edit Event</PageRow>
            <PageRow><PageIcon />Edit Series</PageRow>
          </SideSection>
          <SideSection $top>
            <SideTabs $h={38}>
              <SideTab $x={16}><Bookmark size={14} strokeWidth={1.2} />Libraries</SideTab>
              <SideTab $on $x={134}><ComponentsIcon />Components</SideTab>
            </SideTabs>
            <SearchRow $h={35}>
              <Search size={15} />
              <AddPage />
              <AddFolder />
            </SearchRow>
            <EmptyNote>
              Components can be reused across<br />
              your project. Edit once and see your<br />
              changes everywhere.
            </EmptyNote>
            <LearnLink>Learn more about components</LearnLink>
          </SideSection>
        </Sidebar>

        <Main>
          <TabBar>
            <DocTab $w={87}>Edit Series<X size={10} /></DocTab>
            <DocTab $w={85}>Edit Event<X size={10} /></DocTab>
            <DocTab $on $w={78}>Calendar<X size={10} /></DocTab>
            <TabMenuCaret />
          </TabBar>
          <DeviceRow>
            <DeviceIcon />
            <BaseButton>Base</BaseButton>
          </DeviceRow>
          <RulerRow>
            <RulerCorner><Target /></RulerCorner>
            <TopRuler />
          </RulerRow>
          <CanvasRow>
            <SideRuler><LeftRuler /></SideRuler>
            <Canvas>
              <SiteHeader />
              <SiteBand />
              <LogoWrap>
                <Logo />
                <LogoText>GUIDESLY</LogoText>
              </LogoWrap>
              <SiteNav>
                <SiteNavItem>Guide</SiteNavItem>
                <SiteNavItem><Anchor size={18} strokeWidth={1.1} />What is Guidesly</SiteNavItem>
                <SiteNavItem><MapIcon size={19} strokeWidth={1.1} />Articles</SiteNavItem>
                <SiteNavItem><Info size={19} strokeWidth={1.1} />Who We Are</SiteNavItem>
                <SiteNavItem $gap={19}><User size={19} strokeWidth={1.1} />Login</SiteNavItem>
              </SiteNav>

              <CalPanel>
                <CalHead>
                  <CalTitle>April 2021</CalTitle>
                  <CalNav><ChevronLeft size={26} strokeWidth={1.2} /></CalNav>
                  <CalNav><ChevronRight size={26} strokeWidth={1.2} /></CalNav>
                </CalHead>
                <CalGrid $top={11} $rows="18px">
                  {WEEK.map(w => <WeekName key={w}>{w}</WeekName>)}
                </CalGrid>
                <CalGrid $top={0} $rows="38px 37px 45px 37px 42px">
                  {DAYS.map(([d, tone], i) => <DayCell key={i} $tone={tone}>{d}</DayCell>)}
                </CalGrid>
              </CalPanel>
              <LabelsBar>
                <LabelsTitle>Labels</LabelsTitle>
                <LabelsBtn><Plus size={18} strokeWidth={1.3} /></LabelsBtn>
                <LabelsBtn><ChevronDown size={28} strokeWidth={1.1} /></LabelsBtn>
              </LabelsBar>
              <HolidayPanel>
                <HolidayHead>
                  <HolidayTitle>Unavailable Holidays</HolidayTitle>
                  <RoundAdd><Plus size={22} strokeWidth={1} /></RoundAdd>
                </HolidayHead>
                <HolidayRow $head $top={20}><span>Date</span><HolidayName $head>Federal Holiday</HolidayName></HolidayRow>
                <HolidayRow $top={19}><span>November 25, 2021</span><HolidayName>Thanksgiving Day</HolidayName></HolidayRow>
                <HolidayRow $top={13}><span>December 25, 2021</span><HolidayName>Christmas Day</HolidayName></HolidayRow>
              </HolidayPanel>

              <Tint $x={732} $y={373} $w={809} $h={67} $bg="#e4dff2" />
              <Tint $x={732} $y={440} $w={809} $h={97} $bg="#efecfa" />
              <Tint $x={732} $y={537} $w={809} $h={480} $bg="#d6d6f8" />
              <Tint $x={732} $y={537} $w={31} $h={480} $bg="#ddd3ef" />
              <Tint $x={1525} $y={537} $w={13} $h={480} $bg="#ddd3ef" />
              <Tint $x={1420} $y={537} $w={3} $h={480} $bg="rgba(200,160,210,0.25)" />
              <Tint $x={1350} $y={373} $w={191} $h={287} $bg="rgba(150,110,200,0.13)" />
              <Tint $x={752} $y={480} $w={499} $h={498} $bg="rgba(240,240,50,0.26)" />
              <Tint $x={1000} $y={537} $w={315} $h={100} $bg="rgba(190,190,120,0.35)" />
              <Tint $x={851} $y={640} $w={300} $h={155} $bg="rgba(250,240,60,0.22)" />

              <TimeGrid>
                {['1 AM', '2 AM', '3 AM', '4 AM', '5 AM', '6 AM', ''].map(t => <TimeRow key={t}>{t}</TimeRow>)}
              </TimeGrid>

              <BookingNote>You have 2 New Bookings<X size={14} strokeWidth={1.2} /></BookingNote>
              <CalTools>
                <AddButton>Add Unavailability</AddButton>
                <TodayButton>Today</TodayButton>
                <WeekSelect>Week<ChevronDown size={16} /></WeekSelect>
              </CalTools>
              <DayHeads>
                <DayHead><DayNumber>15</DayNumber>Thursday</DayHead>
                <DayHead><DayNumber>16</DayNumber>Friday</DayHead>
                <DayHead><DayNumber>17</DayNumber>Saturday</DayHead>
              </DayHeads>
              <ScrollUp />

              <SelectionDots />
              <Modal>
                <ModalHead>
                  <ModalTitle>Block Date and Time</ModalTitle>
                  <CloseSquare><X size={24} strokeWidth={1.4} /></CloseSquare>
                </ModalHead>
                <ModalTint $x={38} $y={174} $w={382} $h={152} $bg="#ecebfb" />
                <ModalTint $x={25} $y={243} $w={200} $h={201} $bg="rgba(255,255,0,0.23)" />
                <ModalTint $x={233} $y={243} $w={195} $h={201} $bg="rgba(255,255,0,0.23)" />
                <ModalBody>
                  <TitleRow>
                    Add Title
                    <Hint>If you don't add a Title, it will set to dafault 'Not available'</Hint>
                  </TitleRow>
                  <TextBox />
                  <Rule />
                  <BlockBox>
                    <BoxTitle>Add Date and Time to Block</BoxTitle>
                    <FieldRow $top={11}>
                      <FieldCol $w={179}>
                        <FieldLabel>Select Date From</FieldLabel>
                        <DateInput><DateGlyph /></DateInput>
                      </FieldCol>
                      <FieldCol $w={179} $gap={6}>
                        <FieldLabel>Select Date To</FieldLabel>
                        <DateInput><DateGlyph /></DateInput>
                      </FieldCol>
                    </FieldRow>
                    <FieldRow $top={11}>
                      <FieldCol $w={167}>
                        <FieldLabel $ml={2} $color="#a6a480">Select Time From</FieldLabel>
                        <TimeSelect>12:00 am<Caret /></TimeSelect>
                      </FieldCol>
                      <ToWord>to</ToWord>
                      <FieldCol $w={165}>
                        <FieldLabel $color="#a6a480">Select Time To</FieldLabel>
                        <TimeSelect>11:59 pm<Caret /></TimeSelect>
                      </FieldCol>
                    </FieldRow>
                    <AllDayRow>
                      <MiniCheck $fill>
                        <svg width="9" height="9" fill="none" stroke="#555" strokeWidth="1.5"><path d="M1 4.5l2.5 3L8 1" /></svg>
                      </MiniCheck>
                      All Day
                    </AllDayRow>
                  </BlockBox>
                  <RecurRow><MiniCheck />Make this reccurring</RecurRow>
                  <BlockButton>Block</BlockButton>
                  <PrivateNote>This is private and for your eyes only.</PrivateNote>
                </ModalBody>
                <BoltBadge $x={1175} $y={297}><Bolt /></BoltBadge>
                <BoltBadge $x={1140} $y={616}><Bolt /></BoltBadge>
                <BoltBadge $x={911} $y={648}><Bolt /></BoltBadge>
                <BoltBadge $x={1016} $y={672}><Bolt /></BoltBadge>
              </Modal>
            </Canvas>
          </CanvasRow>

          {GUIDES.map(x => <GuideV key={x} style={{ left: x - 261 }} />)}
          <GuideH />

          <RecurPopover>
            <RecurName>no-recur<RecurCaret /></RecurName>
            <RecurNav><ChevronLeft size={22} strokeWidth={1.1} /><ChevronRight size={22} strokeWidth={1.1} /></RecurNav>
            <ViewAll>View All<DotGrid /></ViewAll>
            <RecurClose><X size={13} strokeWidth={1.3} /></RecurClose>
          </RecurPopover>

          <RightPanel>
            <PanelGrip><X size={11} /></PanelGrip>
            <PanelTabs>
              <SideTab $on $x={15}><Zap size={14} strokeWidth={1.2} />Interactions</SideTab>
              <SideTab $x={127}><MessageSquare size={13} strokeWidth={1.2} />Notes</SideTab>
              <SideTab $x={208}><StyleIcon />Style</SideTab>
            </PanelTabs>
            <PanelTitle>BlockDatesTimes</PanelTitle>
            <PanelBody>
              <SectionHead $h={31}>DYNAMIC PANEL INTERACTIONS<ExportIcon /></SectionHead>
              <NewInteraction>New Interaction</NewInteraction>
              <CommonTitle>COMMON INTERACTIONS</CommonTitle>
              <CommonButton>Click or Tap → Set Next State</CommonButton>
              <CommonButton>Swiped Left → Set Next State</CommonButton>
              <CommonButton>Swiped Right → Set Previous State</CommonButton>
              <PropsDivider />
              <SectionHead $h={28}>DYNAMIC PANEL PROPS<HideUnused>Hide Unused</HideUnused></SectionHead>
              <PropLabel $top={1}>Tooltip</PropLabel>
              <PropField>Tip</PropField>
              <PropLabel $top={17}>Selection Group</PropLabel>
              <PropField>Group Name<ChevronDown size={12} color="#444" /></PropField>
              <PropCheck $top={18}><CheckBox />Disabled</PropCheck>
              <PropCheck $top={19}><CheckBox />Selected</PropCheck>
              <PropCheck $top={19}><CheckBox />Error</PropCheck>
              <PropCheck $top={19}><CheckBox />Apply Mouse Style Effects on All<br />Widgets in Panel</PropCheck>
            </PanelBody>
            <PanelFoot>
              <HelpLink><HelpDot>?</HelpDot>Need help with interactions?</HelpLink>
              <X size={12} color="#888" />
            </PanelFoot>
          </RightPanel>
          <BottomEdge />
        </Main>
      </Workspace>
    </Shell>
  </>
);

export default App;
